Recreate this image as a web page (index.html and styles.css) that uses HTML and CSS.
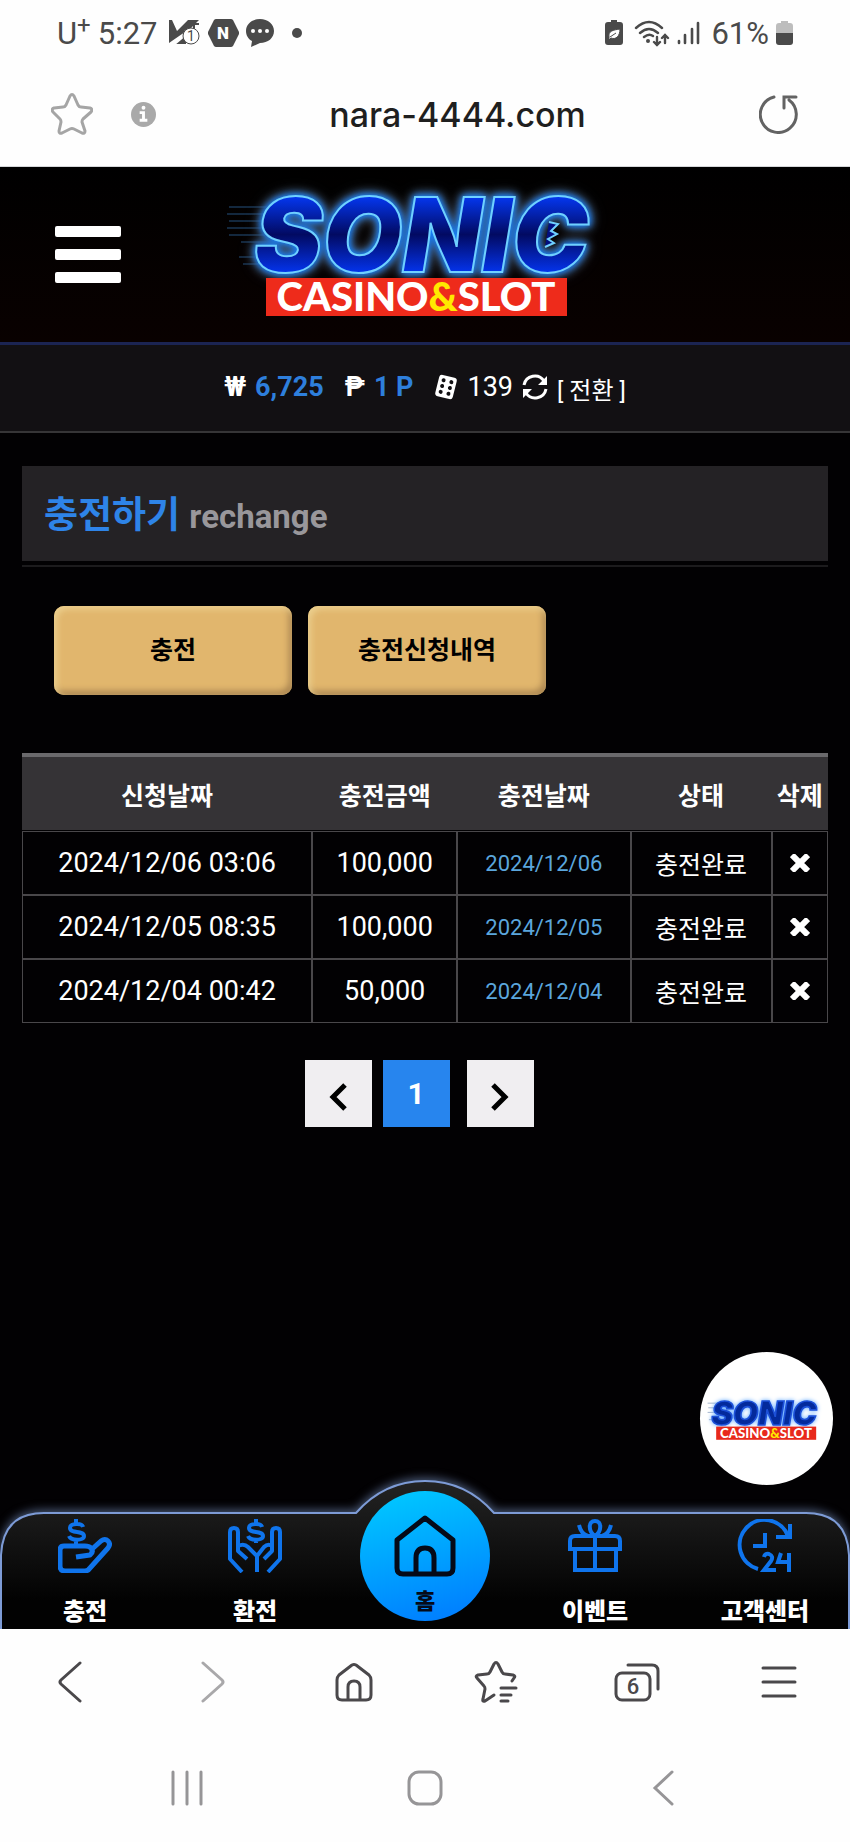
FILE: index.html
```html
<!DOCTYPE html>
<html lang="ko">
<head>
    <meta charset="UTF-8">
    <meta name="viewport" content="width=device-width, initial-scale=1.0">
    <title>충전하기</title>
    <link rel="stylesheet" href="styles.css">
</head>
<body>
    <div class="status-bar">
        <div class="status-group">
            <span>U<sup>+</sup></span>
            <span class="clock">5:27</span>
            <svg width="32" height="28" viewBox="0 0 32 28">
                <path d="M0 1h3l5 11 11-11h11l-8 8-9 6-13 9z" fill="#4a4a4a"/>
                <path d="M10 24l6-5v5zM25 1v9M21 5h9" fill="#4a4a4a" stroke="#4a4a4a" stroke-width="2"/>
                <circle cx="22" cy="17" r="8" fill="#fff" stroke="#4a4a4a" stroke-width="1"/>
                <text x="22" y="22" text-anchor="middle" font-size="14" fill="#4a4a4a">1</text>
            </svg>
            <svg width="31" height="28" viewBox="0 0 31 28">
                <path d="M8 0h15q1 0 2 1l6 12q0 1 0 2l-6 12q-1 1-2 1H8q-1 0-2-1L0 15q0-1 0-2L6 1q1-1 2-1z" fill="#4a4a4a"/>
                <text x="15" y="20" text-anchor="middle" font-size="17" font-weight="900" fill="#fff">N</text>
            </svg>
            <svg width="28" height="28" viewBox="0 0 28 28">
                <path d="M14 0c8 0 14 5 14 12s-6 12-14 12l-9 4 1-6C2 20 0 16 0 12 0 5 6 0 14 0z" fill="#4a4a4a"/>
                <g fill="#fff"><circle cx="7" cy="12" r="2"/><circle cx="14" cy="12" r="2"/><circle cx="21" cy="12" r="2"/></g>
            </svg>
            <span class="dot"></span>
        </div>
        <div class="status-group">
            <svg width="18" height="26" viewBox="0 0 18 26">
                <path d="M6 0h6v2h3q3 0 3 3v17q0 3-3 3H3q-3 0-3-3V5q0-3 3-3h3z" fill="#4a4a4a"/>
                <path d="M4 17c-1-6 4-7 11-8 0 7-4 11-9 9l-2 2zM5 17l6-4" fill="#fff" stroke="#4a4a4a" stroke-width="1"/>
            </svg>
            <svg class="wifi" width="36" height="27" viewBox="0 0 36 27" fill="none" stroke="#4a4a4a" stroke-width="2.4" stroke-linecap="round">
                <path d="M2 8q13-12 26 0M6 13q9-8 18 0M10 17q5-4 9-1M23 17v8m-3-3l3 3 3-3M31 23v-8m-3 3l3-3 3 3"/>
                <circle cx="14" cy="21" r="2" fill="#4a4a4a" stroke="none"/>
            </svg>
            <svg width="23" height="26" viewBox="0 0 23 26" stroke="#4a4a4a" stroke-width="2.6" stroke-linecap="round">
                <path d="M2 21v2M8 15v8M15 9v14M21 3v20"/>
            </svg>
            <span class="percent">61%</span>
            <svg width="17" height="25" viewBox="0 0 17 25">
                <path d="M5 0h7v2h2q3 0 3 3v7H0V5q0-3 3-3h2z" fill="#bdbdbd"/>
                <path d="M0 12h17v9q0 3-3 3H3q-3 0-3-3z" fill="#4a4a4a"/>
            </svg>
        </div>
    </div>

    <div class="address-bar">
        <button class="icon-btn" aria-label="Bookmark">
            <svg width="42" height="42" viewBox="0 0 42 42" fill="none" stroke="#a5a5a5" stroke-width="3" stroke-linejoin="round">
                <path d="M19 3q2-3 4 0l4 9q1 2 3 2l9 1q3 1 1 4l-8 7q-1 1-1 3l3 9q0 3-3 2l-8-4q-2-1-4 0l-8 4q-3 1-3-2l2-9q0-2-1-3l-7-7q-2-3 1-4l9-1q2 0 3-2z"/>
            </svg>
        </button>
        <button class="icon-btn" aria-label="Site info">
            <svg width="25" height="25" viewBox="0 0 26 26">
                <circle cx="13" cy="13" r="13" fill="#a9a9a9"/>
                <path d="M9 11h4v8M9 19h8" fill="none" stroke="#fff" stroke-width="3"/>
                <circle cx="13" cy="6" r="2" fill="#fff"/>
            </svg>
        </button>
        <input class="url" type="text" value="nara-4444.com" aria-label="Address">
        <button class="icon-btn" aria-label="Reload">
            <svg width="40" height="40" viewBox="0 0 40 40" fill="none" stroke="#636363" stroke-width="3" stroke-linecap="round">
                <path d="M15 3A18 18 0 1 0 30 6M25 14V3h12"/>
            </svg>
        </button>
    </div>

    <div class="site">
        <header class="site-header">
            <button class="menu-btn" aria-label="메뉴"><span></span><span></span><span></span></button>
            <svg class="logo" width="400" height="150" viewBox="0 0 400 150">
                <defs>
                    <linearGradient id="blue" x1="0" y1="0" x2="0" y2="1">
                        <stop offset="0.2" stop-color="#0436ee"/>
                        <stop offset="0.5" stop-color="#020a62"/>
                        <stop offset="0.8" stop-color="#0433ea"/>
                    </linearGradient>
                </defs>
                <path d="M4 27h44M2 34h44M4 41h40M2 48h42M4 55h36M16 62h30M14 77h24M18 84h20" stroke="#24507c" stroke-width="1"/>
                <text class="logo-name" x="29" y="92">SONIC</text>
                <path d="M324 42l9 2-7 7 6 3-9 5 6 4-9 4" fill="#020f80" stroke="#6fd0ff" stroke-width="2"/>
                <rect x="41" y="98" width="301" height="38" fill="#ee2b1b"/>
                <text class="logo-sub" x="191" y="131">CASINO<tspan fill="#ffe900">&amp;</tspan>SLOT</text>
            </svg>
        </header>

        <div class="balance">
            <span class="sign">₩</span>
            <b>6,725</b>
            <span class="sign peso">₱</span>
            <b>1 P</b>
            <svg class="dice" width="24" height="26" viewBox="0 0 24 26">
                <g transform="rotate(14 12 13)">
                    <rect x="3" y="2" width="18" height="22" rx="3" fill="#fff"/>
                    <g fill="#121013"><circle cx="8" cy="7" r="2"/><circle cx="16" cy="7" r="2"/><circle cx="8" cy="13" r="2"/><circle cx="16" cy="13" r="2"/><circle cx="8" cy="19" r="2"/><circle cx="16" cy="19" r="2"/></g>
                </g>
            </svg>
            <span>139</span>
            <svg width="26" height="26" viewBox="0 0 26 26" fill="none" stroke="#fff" stroke-width="3">
                <path d="M2 11A11 11 0 0 1 22 7M24 15A11 11 0 0 1 4 19"/>
                <path d="M25 2v9h-9zM1 24v-9h9z" fill="#fff" stroke="none"/>
            </svg>
            <a href="#">[ 전환 ]</a>
        </div>

        <main>
            <div class="page-title">
                <h1>충전하기 <small>rechange</small></h1>
            </div>

            <div class="tabs">
                <button>충전</button>
                <button>충전신청내역</button>
            </div>

            <table>
                <thead>
                    <tr>
                        <th class="col-requested">신청날짜</th>
                        <th class="col-amount">충전금액</th>
                        <th class="col-date">충전날짜</th>
                        <th class="col-state">상태</th>
                        <th class="col-delete">삭제</th>
                    </tr>
                </thead>
                <tbody>
                    <tr>
                        <td>2024/12/06 03:06</td>
                        <td>100,000</td>
                        <td class="date">2024/12/06</td>
                        <td class="state">충전완료</td>
                        <td><button class="icon-btn" aria-label="삭제"><svg width="20" height="18" viewBox="0 0 20 18" stroke="#fff" stroke-width="6"><path d="M2 1l16 16M18 1L2 17"/></svg></button></td>
                    </tr>
                    <tr>
                        <td>2024/12/05 08:35</td>
                        <td>100,000</td>
                        <td class="date">2024/12/05</td>
                        <td class="state">충전완료</td>
                        <td><button class="icon-btn" aria-label="삭제"><svg width="20" height="18" viewBox="0 0 20 18" stroke="#fff" stroke-width="6"><path d="M2 1l16 16M18 1L2 17"/></svg></button></td>
                    </tr>
                    <tr>
                        <td>2024/12/04 00:42</td>
                        <td>50,000</td>
                        <td class="date">2024/12/04</td>
                        <td class="state">충전완료</td>
                        <td><button class="icon-btn" aria-label="삭제"><svg width="20" height="18" viewBox="0 0 20 18" stroke="#fff" stroke-width="6"><path d="M2 1l16 16M18 1L2 17"/></svg></button></td>
                    </tr>
                </tbody>
            </table>

            <div class="pagination">
                <a href="#" aria-label="이전"><svg width="20" height="30" viewBox="0 0 20 30" fill="none" stroke="#000" stroke-width="5"><path d="M17 3L5 15l12 12"/></svg></a>
                <a href="#" class="current">1</a>
                <a href="#" aria-label="다음"><svg width="20" height="30" viewBox="0 0 20 30" fill="none" stroke="#000" stroke-width="5"><path d="M3 3l12 12L3 27"/></svg></a>
            </div>
        </main>

        <a href="#" class="floating" aria-label="SONIC CASINO">
            <svg class="logo" width="132" height="50" viewBox="0 0 400 150">
                <path d="M20 27h44M22 41h40M20 55h36M24 77h24" stroke="#7a93b5" stroke-width="2"/>
                <text class="logo-name small" x="32" y="92">SONIC</text>
                <rect x="46" y="98" width="303" height="40" fill="#e8291b"/>
                <text class="logo-sub" x="197" y="132">CASINO<tspan fill="#ffe900">&amp;</tspan>SLOT</text>
            </svg>
        </a>

        <nav class="bottom-nav">
            <svg class="nav-shape" viewBox="0 0 850 150" preserveAspectRatio="none">
                <defs>
                    <linearGradient id="dark" x1="0" y1="0" x2="0" y2="1">
                        <stop offset="0" stop-color="#232323"/>
                        <stop offset="0.3" stop-color="#171717"/>
                        <stop offset="0.8" stop-color="#020202"/>
                    </linearGradient>
                </defs>
                <path d="M1 151V76Q3 34 44 34H356Q384 2 425 2T494 34H806Q847 34 849 76V151" fill="url(#dark)" stroke="#7d9bd6" stroke-width="2"/>
            </svg>
            <a href="#">
                <svg width="54" height="54" viewBox="0 0 54 54" fill="none" stroke="#0f74ec" stroke-width="5" stroke-linejoin="round">
                    <path d="M18 38l14-2q4-3 1-7-2-2-6-2H6q-4 0-4 4v16q0 5 5 5h20q3 0 5-3l18-20q3-4 0-7t-7 0L33 31"/>
                    <path d="M25 8c-1-4-13-4-13 1 0 6 14 2 14 8 0 5-13 5-15 0M18 0v5M18 20v7" stroke-width="4"/>
                </svg>
                <span>충전</span>
            </a>
            <a href="#">
                <svg width="54" height="54" viewBox="0 0 54 54" fill="none" stroke="#0f74ec" stroke-width="4" stroke-linejoin="round">
                    <path d="M14 53L2 40V13q0-4 4-4t4 4v19l9 8M10 27q6-3 10 1l9 9v16M29 37l7-9q4-4 8-1M40 53l12-13V13q0-4-4-4t-4 4v19l-8 8"/>
                    <path d="M34 8c-1-4-13-4-13 1 0 6 14 2 14 8 0 5-13 5-15 0M28 0v5M28 20v4"/>
                </svg>
                <span>환전</span>
            </a>
            <a href="#" class="home">
                <svg width="62" height="62" viewBox="0 0 62 62" fill="none" stroke="#050a18" stroke-width="5" stroke-linejoin="round">
                    <path d="M3 25L31 3l28 22v28q0 6-6 6H9q-6 0-6-6zM22 59V43q0-10 9-10t9 10v16"/>
                </svg>
                <span>홈</span>
            </a>
            <a href="#">
                <svg width="54" height="54" viewBox="0 0 54 54" fill="none" stroke="#0f74ec" stroke-width="4">
                    <path d="M7 30v21h41V30M27 17v34M2 30V22q0-5 5-5h40q5 0 5 5v8zM27 17c-7-5-7-15 0-15s7 10 0 15zM20 17q-7-2-9-11M34 17q7-2 9-11"/>
                </svg>
                <span>이벤트</span>
            </a>
            <a href="#">
                <svg width="56" height="54" viewBox="0 0 56 54" fill="none" stroke="#0f74ec" stroke-width="4">
                    <path d="M21 50A25 25 0 1 1 51 17M53 5v13H39M28 14v13H16"/>
                    <path d="M27 38q1-4 5-3 5 2 2 7l-7 9h12M44 34l-3 9h12M52 34v19"/>
                </svg>
                <span>고객센터</span>
            </a>
        </nav>
    </div>

    <div class="toolbar">
        <button class="icon-btn" aria-label="Back">
            <svg width="26" height="42" viewBox="0 0 26 42" fill="none" stroke="#4a484b" stroke-width="3" stroke-linecap="round"><path d="M22 2L3 19q-2 2 0 4l19 17"/></svg>
        </button>
        <button class="icon-btn" aria-label="Forward">
            <svg width="26" height="42" viewBox="0 0 26 42" fill="none" stroke="#a9a8aa" stroke-width="3" stroke-linecap="round"><path d="M4 2l19 17q2 2 0 4L4 40"/></svg>
        </button>
        <button class="icon-btn" aria-label="Home">
            <svg width="38" height="40" viewBox="0 0 38 40" fill="none" stroke="#4a484b" stroke-width="3" stroke-linejoin="round"><path d="M2 18q0-3 2-5L17 3q2-1 4 0l13 10q2 2 2 5v15q0 5-5 5H7q-5 0-5-5zM13 38V25q0-6 6-6t6 6v13"/></svg>
        </button>
        <button class="icon-btn" aria-label="Bookmarks">
            <svg width="44" height="42" viewBox="0 0 44 42" fill="none" stroke="#4a484b" stroke-width="3" stroke-linecap="round" stroke-linejoin="round"><path d="M20 34l-9 6q-3 1-2-2l2-10q0-2-1-3l-7-8q-2-2 1-3l9-1q2 0 3-2l4-8q2-3 4 0l4 8q1 2 3 2l8 1q3 1 1 3l-2 3M27 27h15M27 34h10M27 40h7"/></svg>
        </button>
        <button class="icon-btn tab-count" aria-label="Tabs">
            <svg width="46" height="40" viewBox="0 0 46 40" fill="none" stroke="#4a484b" stroke-width="3" stroke-linecap="round"><rect x="2" y="11" width="34" height="27" rx="6"/><path d="M14 3h24q6 0 6 6v18"/><text x="19" y="32" text-anchor="middle">6</text></svg>
        </button>
        <button class="icon-btn" aria-label="Menu">
            <svg width="36" height="34" viewBox="0 0 36 34" stroke="#4a484b" stroke-width="3" stroke-linecap="round"><path d="M2 3h32M2 17h32M2 31h32"/></svg>
        </button>
    </div>

    <div class="system-nav">
        <button class="icon-btn" aria-label="Recent apps">
            <svg width="34" height="36" viewBox="0 0 34 36" stroke="#969597" stroke-width="3" stroke-linecap="round"><path d="M3 2v32M17 2v32M31 2v32"/></svg>
        </button>
        <button class="icon-btn" aria-label="Home screen">
            <svg width="36" height="36" viewBox="0 0 36 36" fill="none" stroke="#969597" stroke-width="3"><rect x="2" y="2" width="32" height="32" rx="10"/></svg>
        </button>
        <button class="icon-btn" aria-label="Go back">
            <svg width="22" height="36" viewBox="0 0 22 36" fill="none" stroke="#969597" stroke-width="3" stroke-linecap="round"><path d="M20 2L3 18l17 16"/></svg>
        </button>
    </div>
</body>
</html>
```
FILE: styles.css
```css
* {
    box-sizing: border-box;
}
body {
    margin: 0;
    min-height: 100vh;
    display: flex;
    flex-direction: column;
    font-family: Roboto, "Noto Sans CJK KR", sans-serif;
    background: #fefefe;
}
svg {
    display: block;
    flex-shrink: 0;
}
a {
    color: inherit;
    text-decoration: none;
}
button {
    font-family: inherit;
    cursor: pointer;
}
.icon-btn {
    display: inline-flex;
    align-items: center;
    justify-content: center;
    padding: 0;
    border: 0;
    background: none;
}

/* phone status bar */
.status-bar {
    height: 66px;
    padding: 0 57px;
    display: flex;
    align-items: center;
    justify-content: space-between;
    font-size: 31px;
    color: #4a4a4a;
}
.status-group {
    display: flex;
    align-items: center;
    gap: 7px;
}
.status-group sup {
    font-size: 24px;
    line-height: 1px;
}
.clock {
    margin-right: 4px;
}
.wifi {
    margin-left: 4px;
}
.percent {
    margin-left: 4px;
}
.dot {
    width: 10px;
    height: 10px;
    margin-left: 11px;
    border-radius: 50%;
    background: #4a4a4a;
}

/* browser address bar */
.address-bar {
    height: 101px;
    padding: 0 51px 4px;
    display: flex;
    align-items: center;
    gap: 38px;
    border-bottom: 1px solid #d5d7d9;
}
.url {
    flex: 1;
    min-width: 0;
    border: 0;
    padding: 0;
    background: none;
    font-family: Inter, sans-serif;
    font-size: 34px;
    font-weight: 500;
    text-align: center;
    color: #1f1f1f;
}

/* site */
.site {
    position: relative;
    flex: 1;
    display: flex;
    flex-direction: column;
    background: #020103;
    color: #fff;
}
.site-header {
    height: 178px;
    padding: 0 55px;
    display: grid;
    grid-template-columns: 1fr auto 1fr;
    align-items: center;
    background: linear-gradient(#000, #090100);
    border-bottom: 3px solid #1b2452;
}
.menu-btn {
    width: 66px;
    display: flex;
    flex-direction: column;
    gap: 12px;
    padding: 0;
    border: 0;
    background: none;
}
.menu-btn span {
    height: 11px;
    border-radius: 2px;
    background: #fff;
}
.logo {
    overflow: visible;
}
.logo-name {
    font-family: Inter, sans-serif;
    font-size: 103px;
    font-weight: 900;
    font-style: italic;
    fill: url(#blue);
    stroke: #6fd0ff;
    stroke-width: 2px;
    filter: drop-shadow(0 0 3px #1784ff) drop-shadow(0 0 4px #1a6ad0) drop-shadow(0 0 5px #555);
}
.logo-name.small {
    font-size: 98px;
    fill: #032a9c;
    stroke: #1c50d8;
    stroke-width: 5px;
    filter: drop-shadow(0 0 6px #5aa5ff);
}
.logo-sub {
    font-family: Lato, sans-serif;
    font-size: 40px;
    font-weight: 900;
    text-anchor: middle;
    fill: #fff;
}
.balance {
    height: 88px;
    padding-bottom: 3px;
    display: flex;
    align-items: center;
    justify-content: center;
    gap: 9px;
    font-size: 27px;
    background: #121013;
    border-bottom: 2px solid #363537;
}
.balance b {
    color: #2e7fdc;
}
.balance .sign {
    font-weight: 700;
}
.balance .peso,
.balance .dice {
    margin-left: 12px;
}
.balance a {
    padding-top: 4px;
    font-size: 24px;
}

main {
    flex: 1;
    padding: 33px 22px 0;
}
.page-title {
    padding-bottom: 4px;
    border-bottom: 2px solid #1c1b1d;
}
.page-title h1 {
    height: 95px;
    margin: 0;
    padding: 2px 22px 0;
    line-height: 95px;
    font-size: 37px;
    background: #242225;
    color: #2e84e8;
}
.page-title small {
    font-size: 33px;
    color: #99979b;
}
.tabs {
    display: flex;
    gap: 16px;
    margin: 39px 32px 58px;
}
.tabs button {
    width: 238px;
    height: 89px;
    padding-bottom: 6px;
    border: 0;
    border-radius: 10px;
    background: #e1b66d;
    box-shadow: inset 3px 3px 6px #ecd08f, inset -3px -4px 6px #a98450;
    font-size: 25px;
    font-weight: bold;
    color: #000;
}
table {
    width: 100%;
    table-layout: fixed;
    border-spacing: 0;
    text-align: center;
    font-size: 27px;
}
th, td {
    padding: 0;
}
th {
    height: 78px;
    border-top: 4px solid #6a696c;
    border-bottom: 1px solid #020103;
    background: #353336;
    font-size: 25px;
}
td {
    height: 64px;
    border: 1px solid #49474a;
}
.col-requested {
    width: 36%;
}
.col-amount {
    width: 18%;
}
.col-date {
    width: 21.5%;
}
.col-state {
    width: 17.5%;
}
.col-delete {
    width: 7%;
}
.date {
    font-size: 22px;
    color: #5ba6dd;
}
.state {
    font-size: 25px;
}
.pagination {
    margin-top: 37px;
    padding-right: 12px;
    display: flex;
    justify-content: center;
    gap: 11px;
}
.pagination a {
    width: 67px;
    height: 67px;
    display: flex;
    align-items: center;
    justify-content: center;
    background: #f0eef1;
    font-size: 30px;
    font-weight: bold;
}
.pagination svg {
    margin-top: 6px;
}
.pagination .current {
    margin-right: 6px;
    background: #2785ee;
}

.floating {
    position: absolute;
    right: 17px;
    bottom: 144px;
    width: 133px;
    height: 133px;
    display: flex;
    align-items: center;
    justify-content: center;
    border-radius: 50%;
    background: #fff;
}

/* bottom menu */
.bottom-nav {
    position: relative;
    height: 117px;
    display: grid;
    grid-template-columns: repeat(5, 1fr);
    font-size: 24px;
    font-weight: 900;
}
.nav-shape {
    position: absolute;
    left: 0;
    bottom: 0;
    width: 100%;
    height: 150px;
    filter: drop-shadow(0 -2px 5px #4a5a78);
}
.bottom-nav a {
    position: relative;
    display: flex;
    flex-direction: column;
    align-items: center;
    gap: 22px;
    padding-top: 7px;
    line-height: 34px;
}
.bottom-nav .home {
    justify-self: center;
    width: 130px;
    height: 130px;
    margin-top: -21px;
    padding-top: 24px;
    gap: 8px;
    border-radius: 50%;
    background: linear-gradient(165deg, #00ccff, #0078ff);
    color: #050a18;
    font-size: 22px;
}

/* browser and system buttons */
.toolbar {
    position: relative;
    height: 105px;
    display: grid;
    grid-template-columns: repeat(6, 1fr);
    background: #fefefe;
}
.tab-count text {
    font-size: 22px;
    font-weight: 500;
    fill: #4a484b;
    stroke: none;
}
.system-nav {
    height: 108px;
    padding: 0 68px;
    display: grid;
    grid-template-columns: repeat(3, 1fr);
}
```
